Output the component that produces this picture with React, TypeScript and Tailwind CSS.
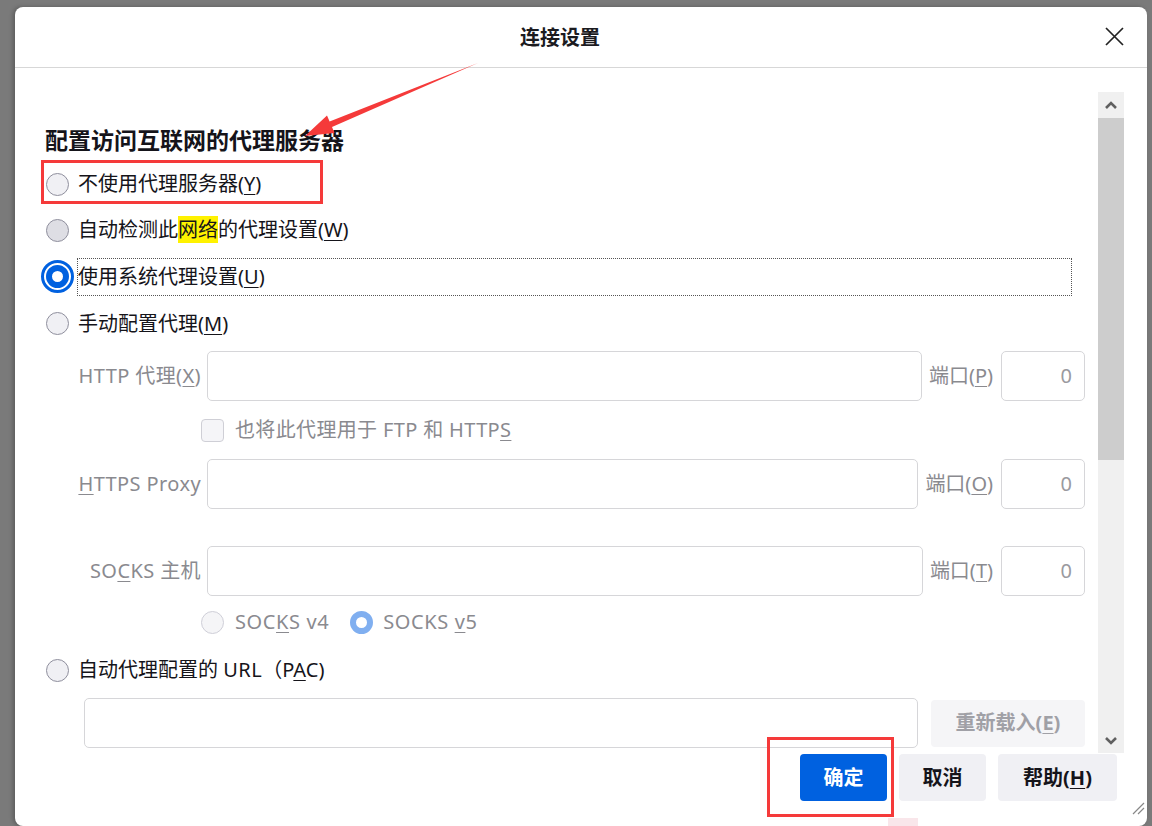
import React from 'react'

const font = "font-['Noto_Sans','Noto_Sans_CJK_SC',sans-serif]"

function Radio({ hover }: { hover?: boolean }) {
  return (
    <span
      className={`block w-[23px] h-[23px] shrink-0 rounded-full border border-[#8f8f9d] ${
        hover ? 'bg-[#dedee4]' : 'bg-[#f0f0f4]'
      }`}
    />
  )
}

function U({ children }: { children: React.ReactNode }) {
  return <u className="underline decoration-1 underline-offset-[3px]">{children}</u>
}

function Field({ label, port }: { label: React.ReactNode; port: React.ReactNode }) {
  return (
    <div className="flex h-[50px] items-stretch">
      <div className="w-[162px] shrink-0 pr-[6px] flex items-center justify-end text-[20px] text-[#8a8a8f] whitespace-nowrap tracking-[0.4px]">
        {label}
      </div>
      <div className="flex-1 rounded-[5px] border border-[#d6d6d9] bg-white" />
      <div className="pl-[7px] pr-[8px] flex items-center text-[20px] text-[#8a8a8f] whitespace-nowrap">
        {port}
      </div>
      <div className="w-[84px] shrink-0 rounded-[5px] border border-[#d6d6d9] bg-white flex items-center justify-end pr-[12px] text-[20px] text-[#9a9aa0]">
        0
      </div>
    </div>
  )
}

export default function App() {
  return (
    <div className={`relative w-[1152px] h-[826px] overflow-hidden bg-[#7a7a7a] pt-[7px] pl-[15px] ${font} text-[#15141a]`}>
      <div className="relative w-[1132px] h-[819px] bg-white rounded-[8px] flex flex-col shadow-[-2px_0_4px_rgba(0,0,0,0.25)]">
        {/* header */}
        <div className="h-[61px] shrink-0 border-b border-[#d7d7d7] flex items-center pt-[2px]">
          <div className="flex-1 text-center text-[20px] font-bold leading-[28px] text-[#1b1b1f]">连接设置</div>
          <div className="w-[42px] flex items-center">
            <svg width="19" height="19" viewBox="0 0 19 19" className="-mt-[4px]">
              <path d="M1 1L18 18M18 1L1 18" stroke="#222" strokeWidth="1.7" fill="none" />
            </svg>
          </div>
        </div>

        {/* body */}
        <div className="h-[685px] shrink-0 flex overflow-hidden">
          <div className="flex-1 pl-[30px] pr-[13px] pt-[58px] text-[20px]">
            <div className="text-[23px] font-bold leading-[28px] text-[#15141a]">配置访问互联网的代理服务器</div>

            <div className="mt-[7px] h-[46px] flex items-center pl-[1px] gap-[9px]">
              <Radio />
              <span>不使用代理服务器(<U>Y</U>)</span>
            </div>
            <div className="h-[46px] flex items-center pl-[1px] gap-[9px]">
              <Radio hover />
              <span>
                自动检测此<span className="bg-[#fff200]">网络</span>的代理设置(<U>W</U>)
              </span>
            </div>
            <div className="h-[47px] flex items-center pl-[1px]">
              <span className="block w-[23px] h-[23px] shrink-0 rounded-full border-[6px] border-[#0061e0] bg-white outline-[3px] outline-offset-[2px] outline-[#0061e0]" />
              <div className="ml-[8px] mr-[13px] flex-1 h-[38px] border border-dotted border-[#555] flex items-center">
                使用系统代理设置(<U>U</U>)
              </div>
            </div>
            <div className="h-[47px] flex items-center pl-[1px] gap-[9px]">
              <Radio />
              <span>手动配置代理(<U>M</U>)</span>
            </div>

            <div className="mt-[4px]">
              <Field label={<>HTTP 代理(<U>X</U>)</>} port={<>端口(<U>P</U>)</>} />
            </div>
            <div className="h-[58px] flex items-center pl-[156px] gap-[11px]">
              <span className="block w-[23px] h-[23px] rounded-[4px] border border-[#cfcfd6] bg-[#f5f5f8]" />
              <span className="text-[#8a8a8f] tracking-[0.35px]">也将此代理用于 FTP 和 HTTP<U>S</U></span>
            </div>
            <Field label={<><U>H</U>TTPS Proxy</>} port={<>端口(<U>O</U>)</>} />

            <div className="mt-[37px]">
              <Field label={<>SO<U>C</U>KS 主机</>} port={<>端口(<U>T</U>)</>} />
            </div>
            <div className="h-[52px] flex items-center pl-[156px] text-[#8a8a8f] tracking-[0.6px]">
              <span className="block w-[23px] h-[23px] rounded-full border border-[#cfcfd8] bg-[#f5f5f7]" />
              <span className="ml-[11px]">SOC<U>K</U>S v4</span>
              <span className="ml-[21px] block w-[23px] h-[23px] rounded-full border-[6px] border-[#80aff0] bg-white" />
              <span className="ml-[10px]">SOCKS <U>v</U>5</span>
            </div>
            <div className="h-[44px] flex items-center pl-[1px] gap-[9px]">
              <Radio />
              <span>自动代理配置的 <span className="tracking-[0.5px]">URL</span>（P<U>A</U>C)</span>
            </div>
            <div className="mt-[6px] h-[50px] flex items-center pl-[39px] gap-[13px]">
              <div className="flex-1 h-[50px] rounded-[5px] border border-[#d6d6d9] bg-white" />
              <div className="w-[154px] h-[47px] rounded-[4px] bg-[#f5f5f7] flex items-center justify-center font-bold text-[#a0a0a6]">
                重新载入(<U>E</U>)
              </div>
            </div>
          </div>

          {/* scrollbar */}
          <div className="w-[26px] mt-[24px] h-[661px] mr-[23px] flex flex-col">
            <div className="h-[26px] bg-[#f0f0f0] flex items-center justify-center">
              <svg width="14" height="9" viewBox="0 0 14 9">
                <path d="M2 7L7 2L12 7" stroke="#606060" strokeWidth="2.6" fill="none" />
              </svg>
            </div>
            <div className="h-[342px] bg-[#cdcdcd]" />
            <div className="flex-1 bg-[#f0f0f0]" />
            <div className="h-[26px] bg-[#f0f0f0] flex items-center justify-center">
              <svg width="14" height="9" viewBox="0 0 14 9">
                <path d="M2 2L7 7L12 2" stroke="#606060" strokeWidth="2.6" fill="none" />
              </svg>
            </div>
          </div>
        </div>

        {/* footer */}
        <div className="flex justify-end gap-[12px] pr-[30px] pt-[1px] text-[20px] font-bold">
          <div className="w-[87px] h-[47px] rounded-[4px] bg-[#0061e0] text-white flex items-center justify-center">确定</div>
          <div className="w-[87px] h-[47px] rounded-[4px] bg-[#f0f0f4] flex items-center justify-center">取消</div>
          <div className="w-[119px] h-[47px] rounded-[4px] bg-[#f0f0f4] flex items-center justify-center">
            帮助(<U>H</U>)
          </div>
        </div>

        <svg width="13" height="13" viewBox="0 0 13 13" className="absolute right-[2px] bottom-[11px]">
          <path d="M12 1L1 12M12 6L6 12" stroke="#888" strokeWidth="1.2" fill="none" />
        </svg>
      </div>

      {/* annotations */}
      <div className="absolute left-[41px] top-[160px] w-[282px] h-[44px] border-[3px] border-[#f53a3a]" />
      <div className="absolute left-[767px] top-[737px] w-[127px] h-[80px] border-[3px] border-[#f53a3a]" />
      <div className="absolute left-[888px] top-[818px] w-[30px] h-[8px] bg-[#f9e6ea]" />
      <svg width="1152" height="826" className="absolute left-0 top-0 pointer-events-none">
        <polygon
          points="478,63 332,127 334.5,133 305,136 327,115.5 329.6,121.4"
          fill="#f53a3a"
        />
      </svg>
    </div>
  )
}
